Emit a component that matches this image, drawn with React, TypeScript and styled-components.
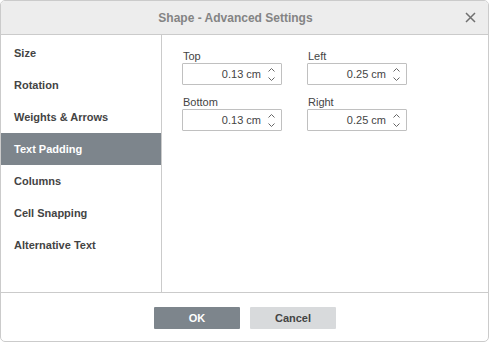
import React, { useState } from 'react';
import styled, { createGlobalStyle } from 'styled-components';

const GlobalStyle = createGlobalStyle`
  html, body {
    margin: 0;
    padding: 0;
    background: #ffffff;
  }
  body {
    font-family: "Liberation Sans", Arial, sans-serif;
  }
`;

const sections = [
    'Size',
    'Rotation',
    'Weights & Arrows',
    'Text Padding',
    'Columns',
    'Cell Snapping',
    'Alternative Text',
];

const fields = [
    { label: 'Top', value: '0.13 cm' },
    { label: 'Left', value: '0.25 cm' },
    { label: 'Bottom', value: '0.13 cm' },
    { label: 'Right', value: '0.25 cm' },
];

const Spinner = () => (
    <SpinBox>
        <svg width="7" height="4" viewBox="0 0 7 4">
            <path d="M0.5 3.5 L3.5 0.5 L6.5 3.5" fill="none" stroke="#666" strokeWidth="1" />
        </svg>
        <svg width="7" height="4" viewBox="0 0 7 4">
            <path d="M0.5 0.5 L3.5 3.5 L6.5 0.5" fill="none" stroke="#666" strokeWidth="1" />
        </svg>
    </SpinBox>
);

const App = () => {
    const [active, setActive] = useState('Text Padding');

    return (
        <>
            <GlobalStyle />
            <Dialog>
                <Header>
                    <Title>Shape - Advanced Settings</Title>
                    <Close aria-label="close">
                        <svg width="11" height="11" viewBox="0 0 11 11">
                            <path d="M1 1 L10 10 M10 1 L1 10" stroke="#707070" strokeWidth="1.5" />
                        </svg>
                    </Close>
                </Header>
                <Body>
                    <Sidebar>
                        {sections.map((name) => (
                            <Item key={name} selected={name === active} onClick={() => setActive(name)}>
                                {name}
                            </Item>
                        ))}
                    </Sidebar>
                    <Content>
                        <Grid>
                            {fields.map((f) => (
                                <Field key={f.label}>
                                    <Label>{f.label}</Label>
                                    <InputBox>
                                        <Value>{f.value}</Value>
                                        <Spinner />
                                    </InputBox>
                                </Field>
                            ))}
                        </Grid>
                    </Content>
                </Body>
                <Footer>
                    <Button primary>OK</Button>
                    <Button>Cancel</Button>
                </Footer>
            </Dialog>
        </>
    );
};

export default App;

const Dialog = styled.div`
  width: 489px;
  height: 342px;
  box-sizing: border-box;
  border: 1px solid #cbcbcb;
  border-radius: 5px;
  overflow: hidden;
  display: flex;
  flex-direction: column;
  background: #fff;
`;

const Header = styled.div`
  height: 33px;
  flex: none;
  background: #ededed;
  border-bottom: 1px solid #cbcbcb;
  display: flex;
  align-items: center;
  justify-content: center;
  position: relative;
  padding-right: 18px;
`;

const Title = styled.div`
  font-size: 12px;
  font-weight: bold;
  color: #848484;
  padding-top: 1px;
`;

const Close = styled.div`
  position: absolute;
  right: 12px;
  top: 11px;
  width: 11px;
  height: 11px;
  display: flex;
  cursor: pointer;
`;

const Body = styled.div`
  height: 257px;
  flex: none;
  display: flex;
`;

const Sidebar = styled.div`
  width: 160px;
  flex: none;
  border-right: 1px solid #cbcbcb;
  padding-top: 2px;
  box-sizing: content-box;
`;

const Item = styled.div<{ selected?: boolean }>`
  height: 32px;
  display: flex;
  align-items: center;
  padding-left: 13px;
  font-size: 11px;
  font-weight: bold;
  color: ${({ selected }) => (selected ? '#ffffff' : '#444444')};
  background: ${({ selected }) => (selected ? '#7d858c' : 'transparent')};
  cursor: pointer;
`;

const Content = styled.div`
  flex: 1;
  padding: 14px 0 0 20px;
`;

const Grid = styled.div`
  display: grid;
  grid-template-columns: 100px 100px;
  column-gap: 25px;
  row-gap: 10px;
`;

const Field = styled.div`
  display: flex;
  flex-direction: column;
`;

const Label = styled.div`
  font-size: 11px;
  line-height: 14px;
  color: #444;
  padding-left: 1px;
`;

const InputBox = styled.div`
  height: 22px;
  box-sizing: border-box;
  border: 1px solid #c0c0c0;
  border-radius: 1px;
  display: flex;
  align-items: center;
  justify-content: flex-end;
`;

const Value = styled.span`
  font-size: 11px;
  color: #444;
  margin-right: 7px;
`;

const SpinBox = styled.div`
  width: 7px;
  display: flex;
  flex-direction: column;
  gap: 5px;
  margin-right: 6px;
`;

const Footer = styled.div`
  flex: 1;
  border-top: 1px solid #cbcbcb;
  display: flex;
  justify-content: center;
  align-items: flex-start;
  gap: 10px;
  padding-top: 14px;
  padding-left: 1px;
`;

const Button = styled.div<{ primary?: boolean }>`
  width: 86px;
  height: 22px;
  border-radius: 1px;
  display: flex;
  align-items: center;
  justify-content: center;
  font-size: 11px;
  font-weight: bold;
  color: ${({ primary }) => (primary ? '#ffffff' : '#444444')};
  background: ${({ primary }) => (primary ? '#7d858c' : '#d8dadc')};
  cursor: pointer;
`;
